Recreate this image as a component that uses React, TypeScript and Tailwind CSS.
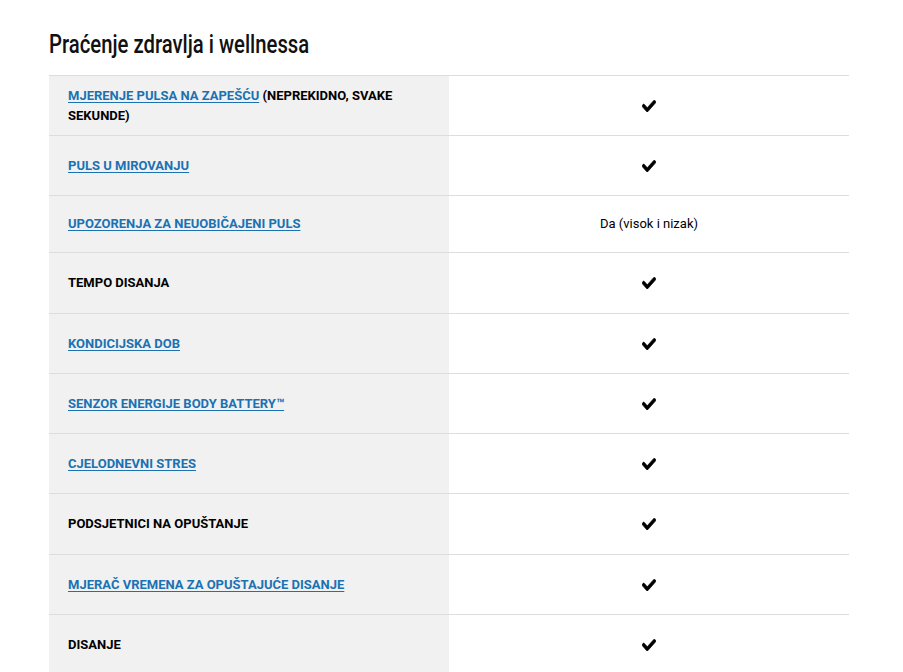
import React from 'react';

type Row = {
  label: string;
  link: boolean;
  extra?: string;
  value?: string;
  h: string;
};

const rows: Row[] = [
  { label: 'MJERENJE PULSA NA ZAPEŠĆU', link: true, extra: ' (NEPREKIDNO, SVAKE SEKUNDE)', h: 'h-[60px]' },
  { label: 'PULS U MIROVANJU', link: true, h: 'h-[60px]' },
  { label: 'UPOZORENJA ZA NEUOBIČAJENI PULS', link: true, value: 'Da (visok i nizak)', h: 'h-[57px]' },
  { label: 'TEMPO DISANJA', link: false, h: 'h-[61px]' },
  { label: 'KONDICIJSKA DOB', link: true, h: 'h-[60px]' },
  { label: 'SENZOR ENERGIJE BODY BATTERY™', link: true, h: 'h-[60px]' },
  { label: 'CJELODNEVNI STRES', link: true, h: 'h-[60px]' },
  { label: 'PODSJETNICI NA OPUŠTANJE', link: false, h: 'h-[61px]' },
  { label: 'MJERAČ VREMENA ZA OPUŠTAJUĆE DISANJE', link: true, h: 'h-[60px]' },
  { label: 'DISANJE', link: false, h: 'h-[60px]' },
];

function Check() {
  return (
    <svg viewBox="0 60 512 390" preserveAspectRatio="none" className="w-[14px] h-[12px]" fill="#000" stroke="#000" strokeWidth="24">
      <path d="M173.9 439.4l-166.4-166.4c-10-10-10-26.2 0-36.2l36.2-36.2c10-10 26.2-10 36.2 0L192 312.7 432.1 72.6c10-10 26.2-10 36.2 0l36.2 36.2c10 10 10 26.2 0 36.2L210.1 439.4c-10 10-26.2 10-36.2 0z" />
    </svg>
  );
}

export default function App() {
  return (
    <div className="min-h-screen bg-white px-[49px] pt-[28px] font-['Roboto',_'Liberation_Sans',_sans-serif]">
      {/* Heading */}
      <h2 className="h-[47px] text-[26px] leading-[32px] text-[#111] font-medium font-['Roboto',_sans-serif]">
        <span className="inline-block origin-left scale-x-[0.78] whitespace-nowrap">Praćenje zdravlja i wellnessa</span>
      </h2>

      {/* Table */}
      <div className="w-[800px] border-t border-[#dddddd]">
        {rows.map((r, i) => (
          <div key={i} className={`grid grid-cols-[400px_400px] border-b border-[#dddddd] ${r.h}`}>
            <div className="bg-[#f1f1f1] flex items-center pl-[19px] pr-[40px]">
              <p className="text-[13px] leading-[20px] font-bold text-black">
                {r.link ? (
                  <a href="#" className="text-[#1a72b3] underline underline-offset-[2px]">
                    {r.label}
                  </a>
                ) : (
                  r.label
                )}
                {r.extra}
              </p>
            </div>
            <div className="flex items-center justify-center">
              {r.value ? (
                <span className="text-[13px] text-black">{r.value}</span>
              ) : (
                <Check />
              )}
            </div>
          </div>
        ))}
      </div>
    </div>
  );
}
